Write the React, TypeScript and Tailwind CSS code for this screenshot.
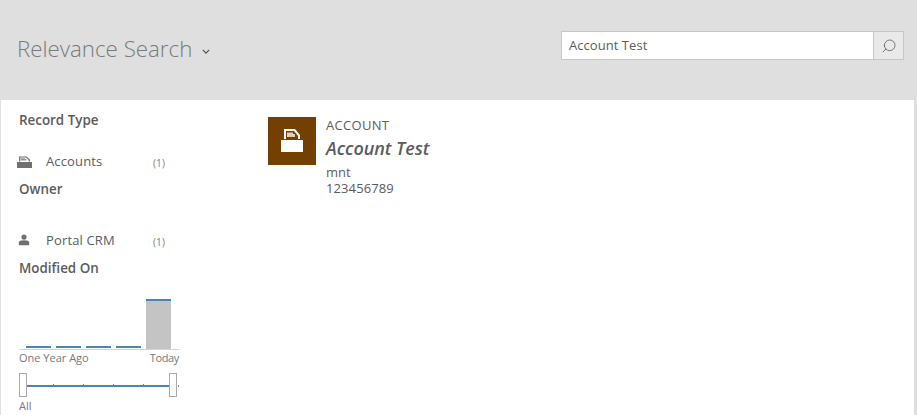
import { Search } from 'lucide-react';

const font = { fontFamily: '"Open Sans", "Noto Sans", sans-serif' };

const AccountIcon = ({ className, fill }: { className: string; fill: string }) => (
  <svg viewBox="0 0 22 24" className={className} preserveAspectRatio="none">
    <path d="M3 11V1h11l5 6v4h-2V8l-4-5H5v8z" fill={fill} />
    <path d="M6 4.5h6V6h2v3H6z" fill={fill} opacity="0.75" />
    <path d="M0 12h22v12H0z" fill={fill} />
  </svg>
);

const FacetRow = ({ icon, label }: { icon: React.ReactNode; label: string }) => (
  <div className="flex items-center h-5 text-[13px] tracking-[0.15px] text-[#5c5c5c]">
    <div className="w-[27px] flex items-center -ml-[2px] mr-[2px]">{icon}</div>
    <span className="w-[107px]">{label}</span>
    <span className="text-[10px] text-[#808080] mt-[3px]">(1)</span>
  </div>
);

const App = () => {
  return (
    <div className="w-[917px] h-[415px] overflow-hidden bg-[#dfdfdf] flex flex-col" style={font}>
      <header className="h-[100px] shrink-0 flex items-start justify-between pl-[17px] pr-[13px]">
        <div className="flex items-center mt-[34px] text-[#7a7a7a]">
          <h1 className="text-[22.3px] leading-[30px] font-light">Relevance Search</h1>
          <svg viewBox="0 0 10 6" className="w-2 h-[5px] ml-[10px] mt-[5px]" fill="none" stroke="#555" strokeWidth="1.6">
            <path d="M1 1l4 4 4-4" />
          </svg>
        </div>
        <div className="flex mt-[31px]">
          <div className="w-[313px] h-[29px] bg-white border border-[#c6c6c6] pl-[7px] flex items-center text-[13px] tracking-[0.05px] text-[#5c5c5c]">
            Account Test
          </div>
          <div className="w-[30px] h-[29px] border border-[#c6c6c6] border-l-0 bg-[#e9e9e9] flex items-center justify-center">
            <Search className="w-4 h-4 text-[#666] -scale-x-100" strokeWidth={1.3} />
          </div>
        </div>
      </header>

      <main className="flex-1 bg-white ml-px mr-[3px] flex">
        <aside className="w-[267px] shrink-0 pl-[18px] pt-[11px]">
          <h2 className="text-[13.4px] leading-[18px] font-semibold text-[#5c5c5c]">Record Type</h2>
          <div className="mt-[23px]">
            <FacetRow icon={<AccountIcon className="w-[15px] h-[12px] -mt-px" fill="#707070" />} label="Accounts" />
          </div>
          <h2 className="text-[13.4px] leading-[18px] font-semibold text-[#5c5c5c] mt-[8px]">Owner</h2>
          <div className="mt-[33px]">
            <FacetRow
              icon={
                <svg viewBox="0 0 14 14" className="w-[12px] h-[12px] ml-px -mt-[2px]" fill="#707070">
                  <circle cx="7" cy="3.6" r="3" />
                  <path d="M1 13V10c0-1.6 2-2.6 6-2.6s6 1 6 2.6v3z" />
                </svg>
              }
              label="Portal CRM"
            />
          </div>
          <h2 className="text-[13.4px] leading-[18px] font-semibold text-[#5c5c5c] mt-[8px]">Modified On</h2>

          {/* histogram */}
          <div className="w-[160px] h-[52px] mt-[21px] border-b border-[#d4d4d4] flex items-end gap-[5px] pl-[7px] pr-[7px]">
            <div className="w-[25px] h-[2px] mb-px bg-[#4a86b0]" />
            <div className="w-[25px] h-[2px] mb-px bg-[#4a86b0]" />
            <div className="w-[25px] h-[2px] mb-px bg-[#4a86b0]" />
            <div className="w-[25px] h-[2px] mb-px bg-[#4a86b0]" />
            <div className="w-[25px] h-[50px] bg-[#c4c4c4] border-t-2 border-[#4a86b0]" />
          </div>
          <div className="w-[160px] flex justify-between text-[11px] leading-[16px] text-[#777] whitespace-nowrap">
            <span>One Year Ago</span>
            <span className="tracking-[-0.35px]">Today</span>
          </div>

          {/* range slider */}
          <div className="relative w-[160px] h-6 mt-[7px] flex items-center">
            <div className="ml-[8px] mt-[2px] w-[143px] h-[2px] bg-[#4a86b0]" />
            <div className="absolute left-[34px] top-[11px] w-px h-[2px] bg-[#4a86b0]" />
            <div className="absolute left-[64px] top-[11px] w-px h-[2px] bg-[#4a86b0]" />
            <div className="absolute left-[94px] top-[11px] w-px h-[2px] bg-[#4a86b0]" />
            <div className="absolute left-[124px] top-[11px] w-px h-[2px] bg-[#4a86b0]" />
            <div className="absolute left-[159px] top-[12px] w-px h-[2px] bg-[#888]" />
            <div className="absolute left-0 top-0 w-2 h-6 bg-white border border-[#a9a9a9]" />
            <div className="absolute left-[150px] top-0 w-2 h-6 bg-white border border-[#a9a9a9]" />
          </div>
          <div className="text-[11px] leading-[16px] text-[#777] mt-px">All</div>
        </aside>

        <section className="pt-[17px] flex items-start">
          <div className="w-12 h-12 bg-[#734000] flex items-center justify-center pb-[2px]">
            <AccountIcon className="w-[22px] h-[24px]" fill="#fff" />
          </div>
          <div className="ml-[10px] -mt-[2px] text-[#5c5c5c]">
            <div className="text-[13px] leading-[20px] tracking-[0.3px]">ACCOUNT</div>
            <div className="text-[18px] leading-[24px] mt-px font-semibold italic tracking-[-0.05px]">Account Test</div>
            <div className="text-[13px] leading-[16px] mt-[4px]">mnt</div>
            <div className="text-[13px] leading-[16px] tracking-[0.1px]">123456789</div>
          </div>
        </section>
      </main>
    </div>
  );
};

export default App;
